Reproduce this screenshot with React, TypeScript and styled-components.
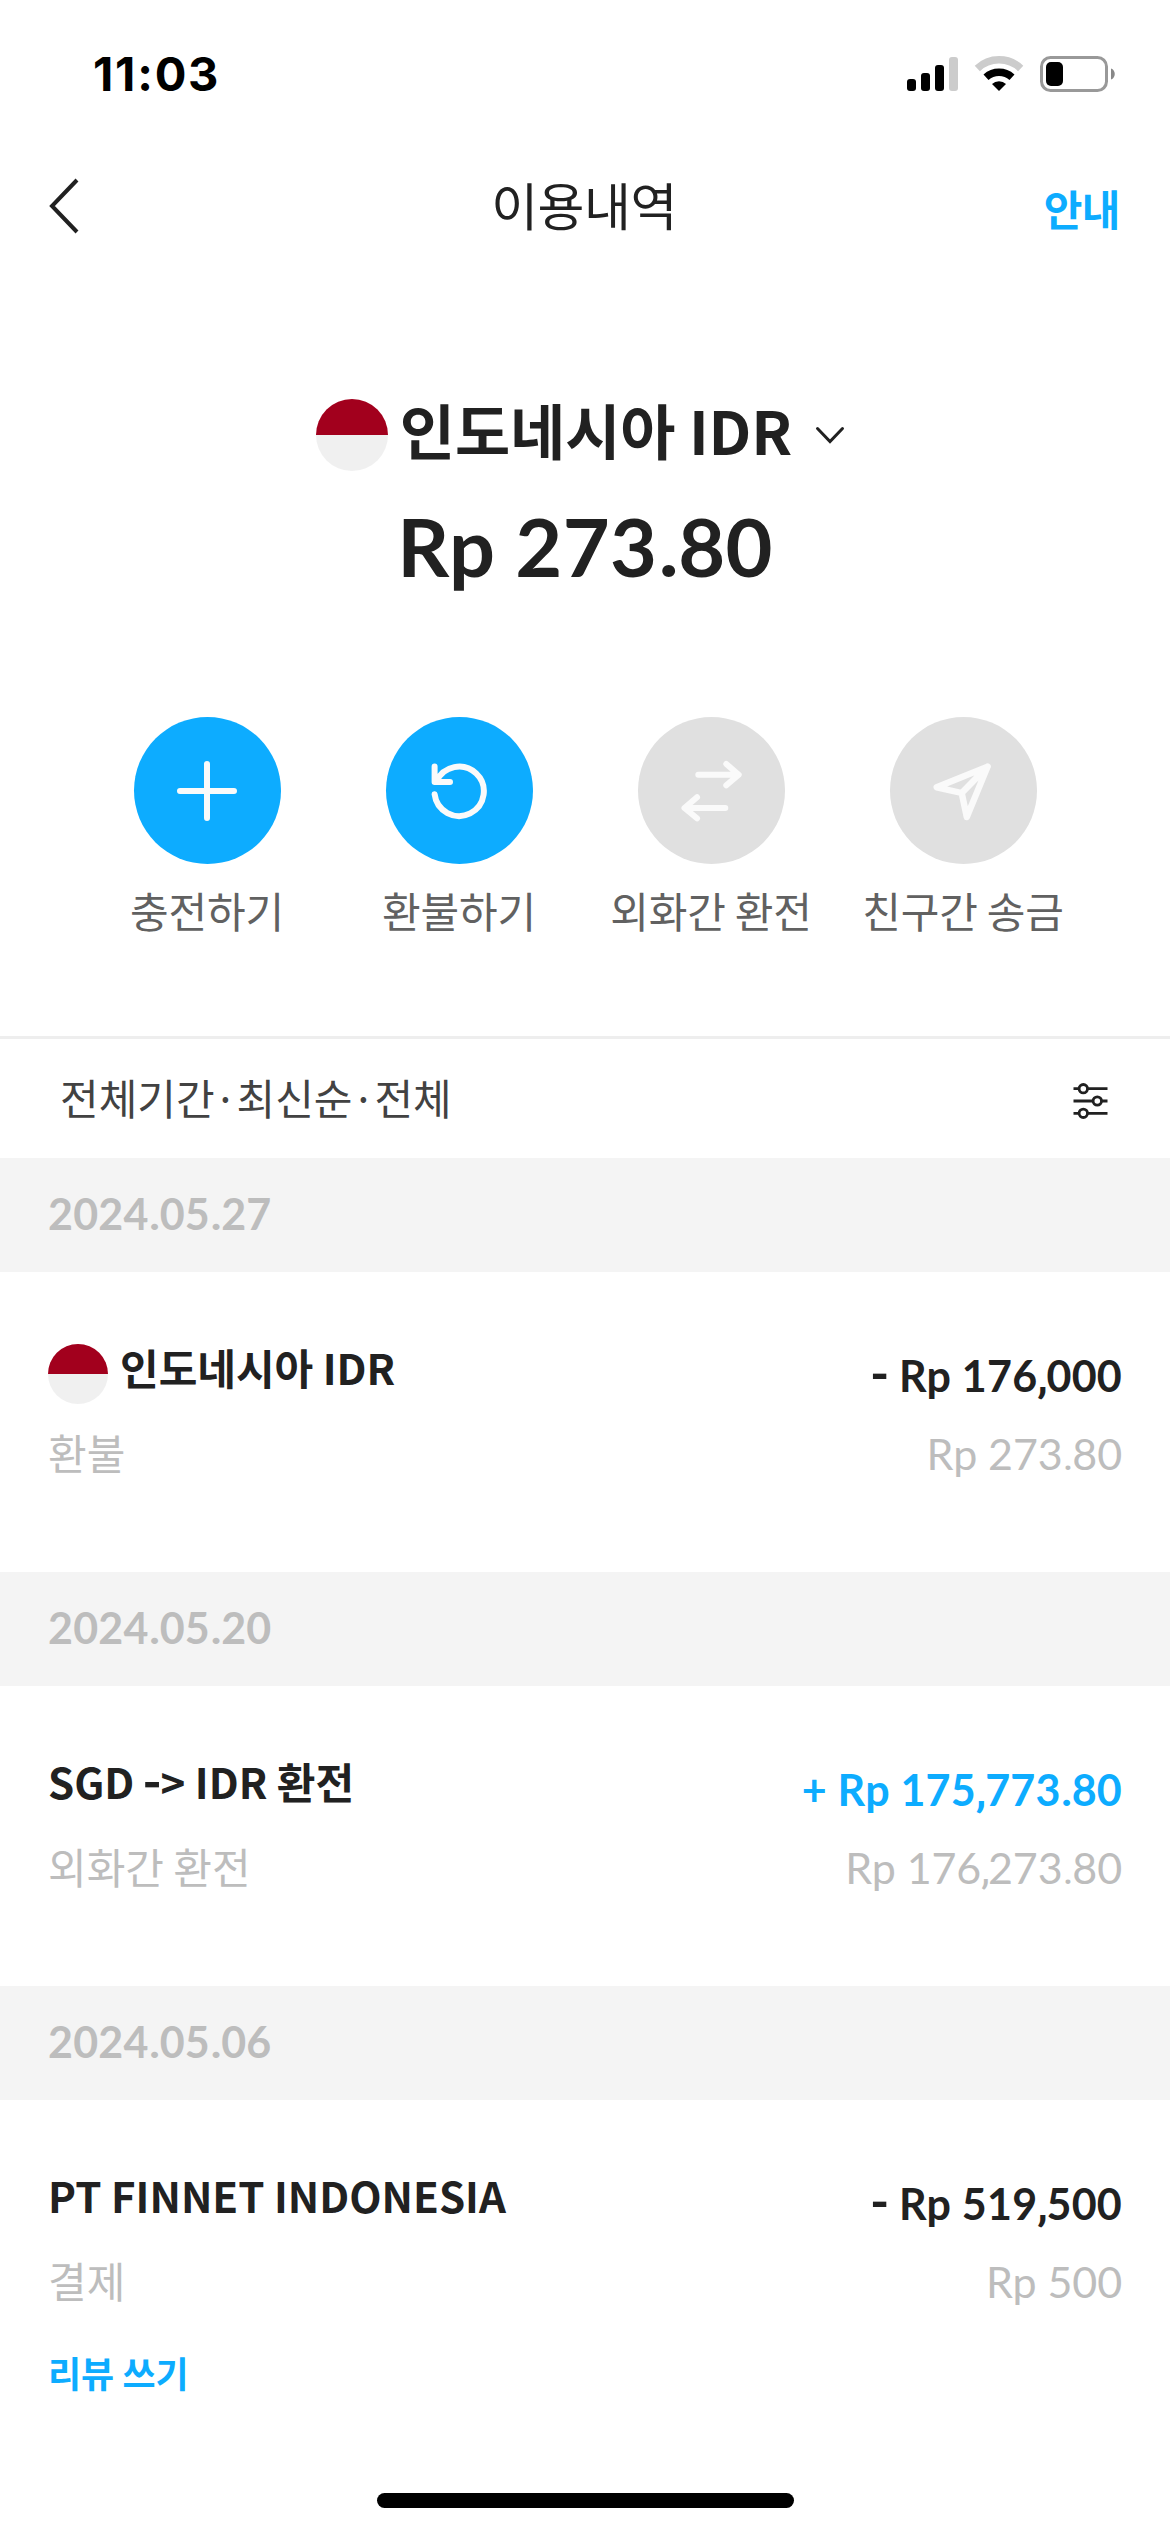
import React from "react";
import styled, { createGlobalStyle } from "styled-components";

const KR = `"Noto Sans CJK KR", "Noto Sans", sans-serif`;
const LATO = `Lato, "Noto Sans CJK KR", sans-serif`;
const BLUE = "#0dacff";

const Global = createGlobalStyle`
  * { box-sizing: border-box; }
  body { margin: 0; background: #fff; }
`;

const Screen = styled.div`
  width: 1170px;
  height: 2532px;
  display: flex;
  flex-direction: column;
  background: #fff;
  color: #212121;
  font-family: ${KR};
  overflow: hidden;
`;

const StatusBar = styled.div`
  height: 141px;
  padding: 0 55px 0 93px;
  display: flex;
  justify-content: space-between;
  align-items: flex-start;
`;

const Clock = styled.div`
  margin-top: 44px;
  font: 700 47px/60px Inter, sans-serif;
  letter-spacing: 1.8px;
  color: #000;
`;

const StatusIcons = styled.svg`
  display: block;
  margin-top: 50px;
`;

const NavBar = styled.header`
  height: 130px;
  padding: 0 50px 0 48px;
  display: grid;
  grid-template-columns: 200px 1fr 200px;
  align-items: center;
`;

const Title = styled.h1`
  margin: 0 0 5px;
  text-align: center;
  font-size: 51px;
  line-height: 70px;
  font-weight: 400;
  letter-spacing: -0.5px;
`;

const GuideLink = styled.a`
  margin-top: 3px;
  justify-self: end;
  font-size: 42px;
  line-height: 60px;
  font-weight: 700;
  letter-spacing: -0.5px;
  color: ${BLUE};
`;

const Hero = styled.section`
  height: 446px;
  padding-top: 128px;
  display: flex;
  flex-direction: column;
  align-items: center;
`;

const CurrencyPicker = styled.div`
  height: 72px;
  padding-right: 9px;
  display: flex;
  align-items: center;
`;

const CurrencyName = styled.div`
  margin: 0 23px 12px 12px;
  font-size: 60px;
  line-height: 72px;
  font-weight: 700;
  letter-spacing: -0.1px;
`;

const Balance = styled.div`
  margin-top: 27px;
  font: 700 81px/96px ${LATO};
  letter-spacing: 0.3px;
`;

const Flag = styled.span<{ $size: number }>`
  flex: none;
  width: ${(p) => p.$size}px;
  height: ${(p) => p.$size}px;
  border-radius: 50%;
  background: linear-gradient(#a2001d 50%, #f0f0f0 50%);
`;

const Actions = styled.nav`
  height: 319px;
  padding: 0 81px;
  display: grid;
  grid-template-columns: repeat(4, 252px);
`;

const Action = styled.div`
  display: flex;
  flex-direction: column;
  align-items: center;
`;

const ActionCircle = styled.div<{ $active: boolean }>`
  width: 147px;
  height: 147px;
  border-radius: 50%;
  display: flex;
  align-items: center;
  justify-content: center;
  background: ${(p) => (p.$active ? BLUE : "#e0e0e0")};
`;

const ActionLabel = styled.div`
  margin-top: 16px;
  font-size: 42px;
  line-height: 60px;
  letter-spacing: -0.2px;
  color: #616161;
  white-space: nowrap;
`;

const FilterBar = styled.div`
  height: 122px;
  padding: 0 60px 3px;
  border-top: 3px solid #eee;
  display: flex;
  align-items: center;
  justify-content: space-between;
`;

const FilterText = styled.div`
  display: flex;
  font-size: 42px;
  line-height: 60px;
  color: #424242;
`;

const Dot = styled.span`
  width: 22px;
  display: flex;
  justify-content: center;
`;

const FilterIcon = styled.svg`
  display: block;
  margin-top: 7px;
`;

const DateBand = styled.div`
  height: 114px;
  padding: 0 48px 2px;
  display: flex;
  align-items: center;
  background: #f4f4f4;
  color: #bdbdbd;
  font: 700 43px/60px ${LATO};
  letter-spacing: 0.2px;
`;

const Item = styled.article`
  height: 300px;
  padding: 0 48px;
  display: flex;
  justify-content: space-between;
`;

const ItemLeft = styled.div`
  padding-top: 65px;
  display: flex;
  flex-direction: column;
  align-items: flex-start;
`;

const ItemName = styled.div`
  height: 60px;
  display: flex;
  gap: 12px;
  font-size: 42px;
  line-height: 60px;
  font-weight: 700;

  ${Flag} {
    margin-top: 7px;
  }
`;

const ItemKind = styled.div`
  margin-top: 25px;
  font-size: 42px;
  line-height: 60px;
  color: #bdbdbd;
`;

const ReviewLink = styled.a`
  margin-top: 37px;
  font-size: 36px;
  line-height: 50px;
  font-weight: 700;
  color: ${BLUE};
`;

const ItemRight = styled.div`
  padding-top: 74px;
  display: flex;
  flex-direction: column;
  align-items: flex-end;
`;

/* Square-cornered periods and commas for figures */
const Point = styled.span`
  margin-right: -0.035em;
  font-family: Roboto, sans-serif;
  line-height: 0;
`;

/* Hyphen raised to the middle of the capitals */
const Dash = styled.span`
  margin: 0 -0.02em;
  font-size: 1.2em;
  line-height: 0;
`;

const Amount = styled.div<{ $plus?: boolean }>`
  font: 700 43px/60px ${LATO};
  letter-spacing: 0.2px;
  color: ${(p) => (p.$plus ? BLUE : "#212121")};
`;

const Remaining = styled.div`
  margin-top: 18px;
  font: 400 43px/60px ${LATO};
  letter-spacing: -0.1px;
  color: #bdbdbd;
`;

const HomeArea = styled.footer`
  flex: 1;
  display: flex;
  align-items: flex-end;
  justify-content: center;
  padding-bottom: 24px;
`;

const HomeBar = styled.div`
  width: 417px;
  height: 15px;
  border-radius: 8px;
  background: #000;
`;

function Rich({ text }: { text: string }) {
  return (
    <span>
      {text.split(/([.,-])/).map((part, i) => {
        if (part === "-") return <Dash key={i}>-</Dash>;
        if (part === "." || part === ",") return <Point key={i}>{part}</Point>;
        return part;
      })}
    </span>
  );
}

const icons = {
  plus: <path d="M-27 0H27M0-27V27" />,
  refund: <path d="M-24.4 3.2A24.7 24.7 0 1 0-22.5-9.6M-24.4-24.5V-9H-9" />,
  swap: (
    <path d="M-12.7-16.3H26M15.3-27L27.7-16.3 15.3-5.7M14.3 17H-25M-14 6.3L-26.5 17-14 27.3" />
  ),
  send: <path strokeWidth={6.4} d="M24.6-24.4L-26.3-3.7-1.3 2 3.8 26ZM-1.3 2L24.6-24.4" />,
};

const actions: { icon: keyof typeof icons; label: string; active: boolean }[] = [
  { icon: "plus", label: "충전하기", active: true },
  { icon: "refund", label: "환불하기", active: true },
  { icon: "swap", label: "외화간 환전", active: false },
  { icon: "send", label: "친구간 송금", active: false },
];

const history = [
  { date: "2024.05.27", name: "인도네시아 IDR", flag: true, kind: "환불", amount: "- Rp 176,000", left: "Rp 273.80" },
  { date: "2024.05.20", name: "SGD -> IDR 환전", kind: "외화간 환전", amount: "+ Rp 175,773.80", plus: true, left: "Rp 176,273.80" },
  { date: "2024.05.06", name: "PT FINNET INDONESIA", kind: "결제", amount: "- Rp 519,500", left: "Rp 500", review: true },
];

export default function App() {
  return (
    <Screen>
      <Global />
      <StatusBar>
        <Clock>11:03</Clock>
        <StatusIcons width="208" height="46" viewBox="907 50 208 46">
          <rect x="907" y="79" width="9" height="12" rx="3" />
          <rect x="921" y="73" width="9" height="18" rx="3" />
          <rect x="935" y="65" width="9" height="26" rx="3" />
          <rect x="949" y="57" width="9" height="34" rx="3" fill="#ccc" />
          <path d="M977.3 68.5A31.5 31.5 0 0 1 1020.7 68.5" fill="none" stroke="#ccc" strokeWidth="7.5" />
          <path d="M986 77.3A19.5 19.5 0 0 1 1012 77.3" fill="none" stroke="#000" strokeWidth="7.5" />
          <path d="M999 91L992 84A10 10 0 0 1 1006 84Z" />
          <rect x="1041.5" y="57.5" width="65" height="33" rx="9" fill="none" stroke="#999" strokeWidth="3" />
          <rect x="1046" y="62" width="17" height="24" rx="5" />
          <path d="M1111 68.5C1116 70 1116 78 1111 79.5Z" fill="#888" />
        </StatusIcons>
      </StatusBar>

      <NavBar>
        <svg width="32" height="58" viewBox="0 0 32 58" fill="none" stroke="#212121" strokeWidth="4">
          <path d="M29 3L4 29L29 55" />
        </svg>
        <Title>이용내역</Title>
        <GuideLink>안내</GuideLink>
      </NavBar>

      <Hero>
        <CurrencyPicker>
          <Flag $size={72} />
          <CurrencyName>인도네시아 IDR</CurrencyName>
          <svg width="30" height="18" viewBox="0 0 30 18" fill="none" stroke="#212121" strokeWidth="3" strokeLinecap="round">
            <path d="M2.5 2.5L15 15.5L27.5 2.5" />
          </svg>
        </CurrencyPicker>
        <Balance>
          <Rich text="Rp 273.80" />
        </Balance>
      </Hero>

      <Actions>
        {actions.map((a) => (
          <Action key={a.label}>
            <ActionCircle $active={a.active}>
              <svg width="72" height="72" viewBox="-36 -36 72 72" fill="none" stroke="#fafafa" strokeWidth="6" strokeLinecap="round" strokeLinejoin="round">
                {icons[a.icon]}
              </svg>
            </ActionCircle>
            <ActionLabel>{a.label}</ActionLabel>
          </Action>
        ))}
      </Actions>

      <FilterBar>
        <FilterText>
          전체기간<Dot>·</Dot>최신순<Dot>·</Dot>전체
        </FilterText>
        <FilterIcon width="38" height="38" viewBox="0 0 38 38" fill="#fff" stroke="#212121" strokeWidth="2.8">
          <path d="M1.5 6.7H35.5M1.5 19H35.5M1.5 31.3H35.5" />
          <circle cx="11.3" cy="6.7" r="4.2" />
          <circle cx="25.3" cy="19" r="4.2" />
          <circle cx="11.3" cy="31.3" r="4.2" />
        </FilterIcon>
      </FilterBar>

      {history.map((h) => (
        <section key={h.date}>
          <DateBand>
            <Rich text={h.date} />
          </DateBand>
          <Item>
            <ItemLeft>
              <ItemName>
                {h.flag && <Flag $size={60} />}
                <Rich text={h.name} />
              </ItemName>
              <ItemKind>{h.kind}</ItemKind>
              {h.review && <ReviewLink>리뷰 쓰기</ReviewLink>}
            </ItemLeft>
            <ItemRight>
              <Amount $plus={h.plus}>
                <Rich text={h.amount} />
              </Amount>
              <Remaining>
                <Rich text={h.left} />
              </Remaining>
            </ItemRight>
          </Item>
        </section>
      ))}

      <HomeArea>
        <HomeBar />
      </HomeArea>
    </Screen>
  );
}
